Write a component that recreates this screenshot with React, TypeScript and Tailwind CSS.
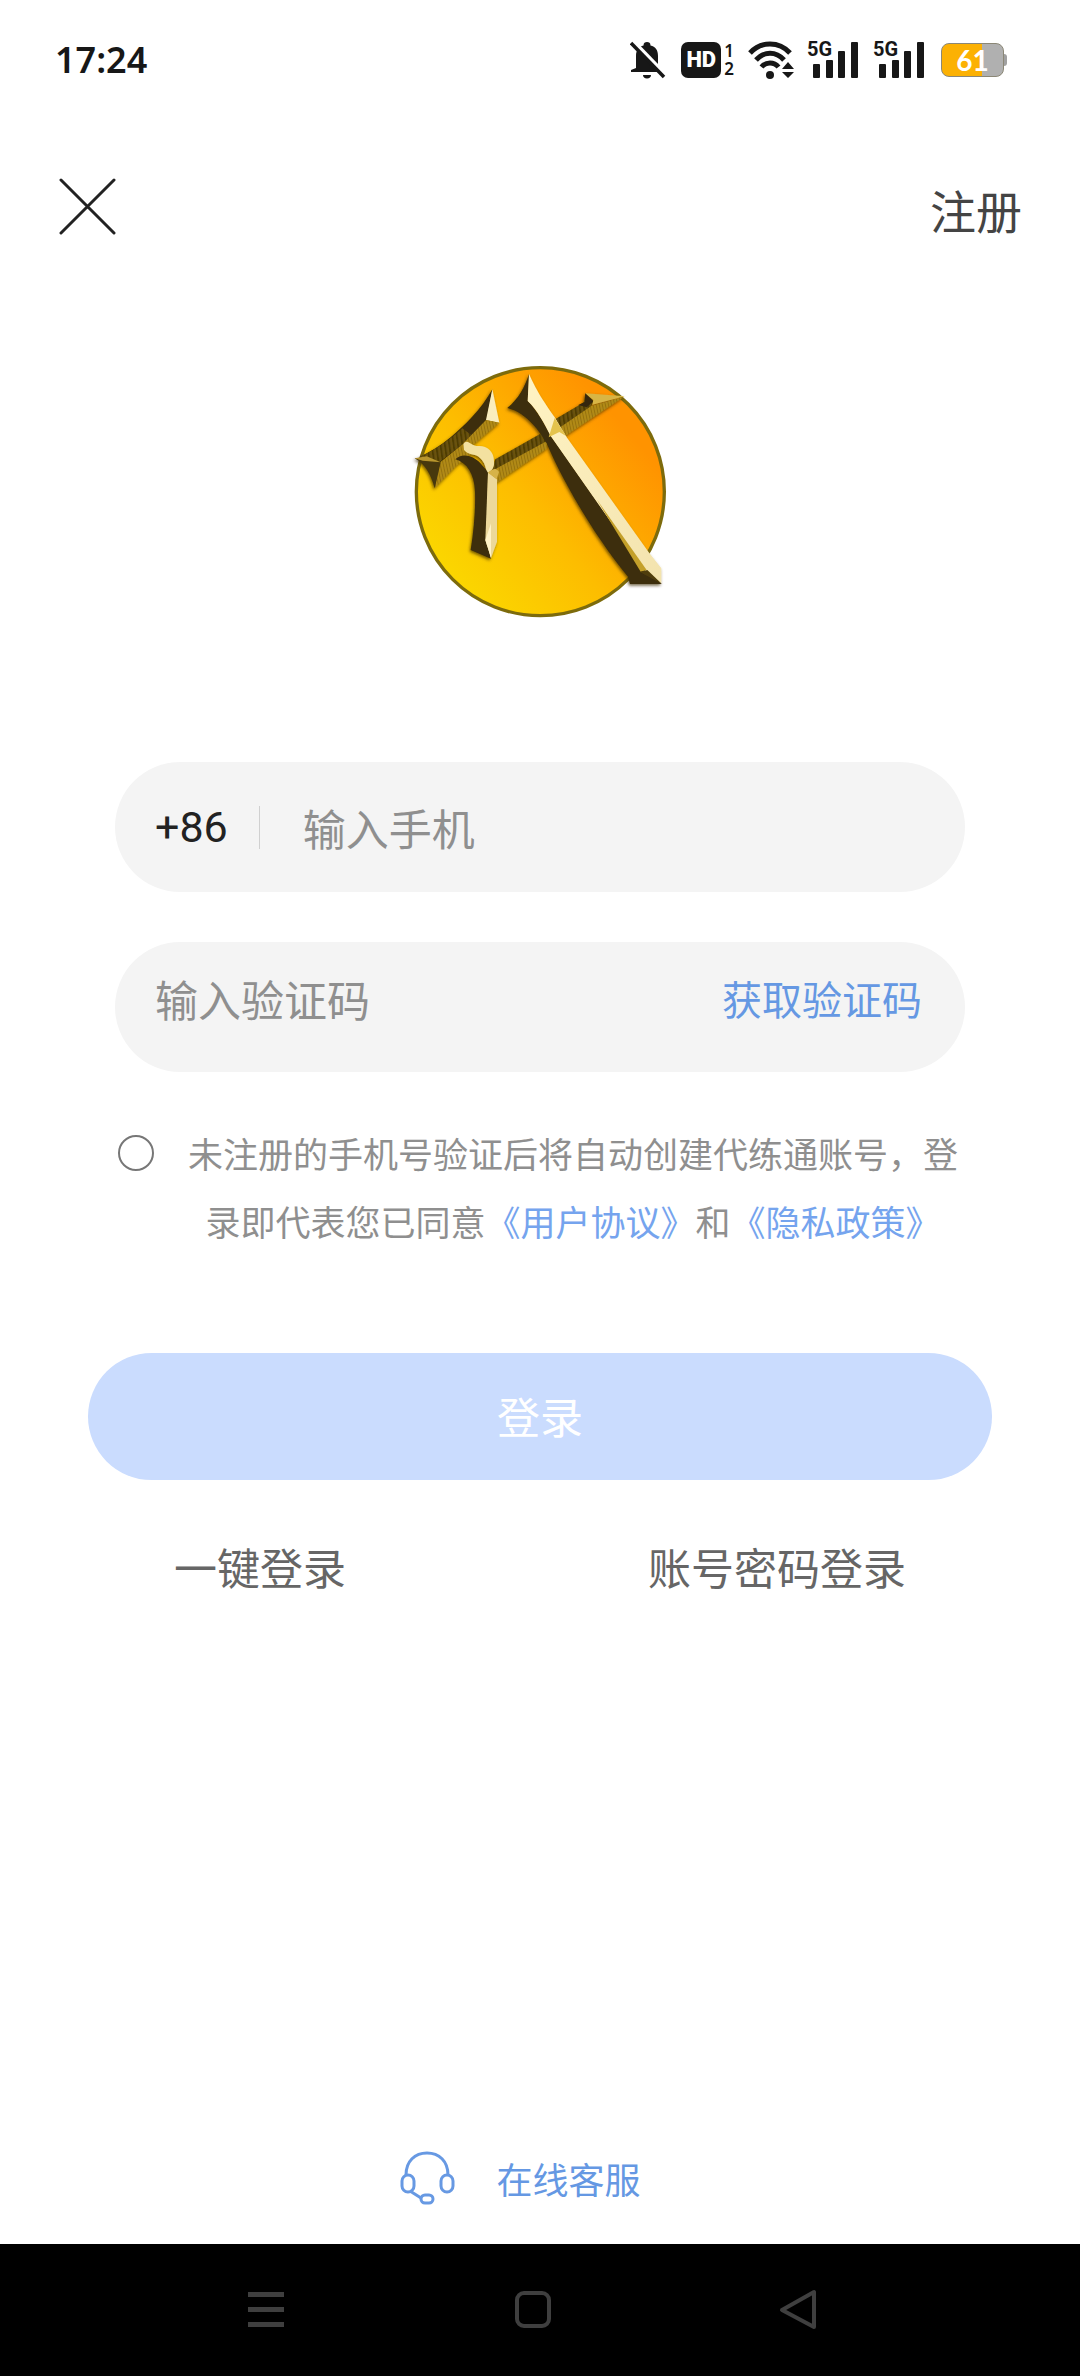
import { useState } from 'react'
import type { FormEvent } from 'react'

function BellOffIcon() {
  return (
    <svg width="36" height="38" viewBox="0 0 36 38" aria-hidden="true">
      <path d="M6 27V15C6 9 9 5.500 13.500 4.500C13.500 1.800 15 1 17 1s3.500.800 3.500 3.500C25.500 5.500 28 9 28 15v10l2.500 3v3H1v-2z" fill="#171717" />
      <path d="M13 34h8c0 2-1.500 3.500-4 3.500S13 36 13 34z" fill="#171717" />
      <path d="M3 0l33 34" stroke="#fff" strokeWidth="4" />
      <path d="M1 2l33 34" stroke="#171717" strokeWidth="3.500" />
    </svg>
  )
}

function WifiIcon() {
  return (
    <svg width="46" height="38" viewBox="0 0 46 38" fill="none" aria-hidden="true">
      <path d="M2 12C13 0 31 0 42 12M8 19C16 10 28 10 36 19M13.500 26C18 20.500 26 20.500 30.500 26" stroke="#171717" strokeWidth="5" />
      <circle cx="22" cy="34" r="4" fill="#171717" />
      <path d="M34 28l6-7 6 7zM34 31h12l-6 6z" fill="#171717" />
    </svg>
  )
}

function SignalIcon() {
  return (
    <svg width="52" height="50" viewBox="0 -6 52 50" fill="#171717" aria-label="5G">
      <text x="0" y="15" fontSize="20" fontWeight="700" className="font-['Roboto',sans-serif]">5G</text>
      <rect x="6" y="23" width="7" height="14" rx="1" />
      <rect x="19" y="19" width="7" height="18" rx="1" />
      <rect x="31" y="10" width="7" height="27" rx="1" />
      <rect x="44" y="1" width="7" height="36" rx="1" />
    </svg>
  )
}

function StatusBar() {
  return (
    <div className="flex h-[120px] items-center justify-between pl-[55px] pr-[73px] text-[#171717]">
      <span className="font-['Noto_Sans',sans-serif] text-[36px] font-semibold">17:24</span>
      <div className="flex items-center">
        <BellOffIcon />
        <div className="ml-[15px] flex h-9 w-10 items-center justify-center rounded-[7px] bg-[#171717] font-['Roboto',sans-serif] text-[22px] font-black text-white">HD</div>
        <div className="ml-[3px] mr-[14px] flex flex-col font-['Noto_Sans',sans-serif] text-[17px] leading-[18px] font-semibold">
          <span>1</span>
          <span>2</span>
        </div>
        <WifiIcon />
        <div className="ml-[13px] flex gap-[14px]">
          <SignalIcon />
          <SignalIcon />
        </div>
        <div className="ml-[16px] flex items-center">
          <div className="flex h-[34px] w-[63px] items-center justify-center rounded-[8px] border border-[#8b8776] bg-[linear-gradient(90deg,#fcb103_66%,#b0b0b0_66%)] font-['Lato',sans-serif] text-[28px] font-bold text-white">61</div>
          <div className="h-3 w-[3px] rounded-r-sm bg-[#a0a0a0]" />
        </div>
      </div>
    </div>
  )
}

function Logo() {
  return (
    <svg width="280" height="280" viewBox="0 0 840 840" role="img" aria-label="代练通">
      <defs>
        <linearGradient id="disc" x1="0.150" y1="0.850" x2="0.850" y2="0.250">
          <stop offset="0" stopColor="#fbd600" />
          <stop offset="0.450" stopColor="#fdbd00" />
          <stop offset="1" stopColor="#ff9300" />
        </linearGradient>
        <linearGradient id="cream" x1="0" y1="0" x2="1" y2="1">
          <stop offset="0" stopColor="#fff3c4" />
          <stop offset="1" stopColor="#f3e3ae" />
        </linearGradient>
        <pattern id="hatchDark" width="13" height="60" patternUnits="userSpaceOnUse" patternTransform="rotate(-8)">
          <rect width="13" height="60" fill="#6b5308" />
          <rect width="6" height="60" fill="#4f3d06" />
        </pattern>
        <pattern id="hatchGold" width="9" height="40" patternUnits="userSpaceOnUse" patternTransform="rotate(-12)">
          <rect width="9" height="40" fill="#b18a14" />
          <rect width="3" height="40" fill="#967210" />
        </pattern>
        <filter id="shadow" x="-10%" y="-10%" width="120%" height="120%">
          <feDropShadow dx="-3" dy="5" stdDeviation="5" floodColor="#3a2900" floodOpacity="0.700" />
        </filter>
      </defs>
      <circle cx="421" cy="425" r="372" fill="url(#disc)" stroke="#7d6b0c" strokeWidth="10" />
      <g filter="url(#shadow)">
        {/* cross bar */}
        <path d="M286 328L420 252L446 266L440 276L276 364z" fill="url(#hatchDark)" />
        <path d="M274 364L442 272L440 296L290 398z" fill="url(#hatchGold)" />
        <path d="M468 206L552 157L556 130L580 155L572 170L478 238z" fill="url(#hatchDark)" />
        <path d="M556 130L580 154L560 172L535 165L554 156z" fill="#34270a" />
        <path d="M474 236L574 168L672 140L492 260z" fill="url(#hatchGold)" />
        <path d="M556 130L674 139L577 164L580 150z" fill="#d8b544" />
        {/* short falling stroke */}
        <path d="M277 118C245 178 190 230 152 262C120 288 88 308 58 322L118 338L192 280L260 210z" fill="#3c2d08" />
        <path d="M187 235C150 270 100 302 58 322L118 336L192 280L214 255z" fill="url(#hatchDark)" />
        <path d="M277 118L298 218L258 210z" fill="#faedbd" />
        <path d="M258 210L298 218L216 288L190 280z" fill="url(#hatchGold)" />
        <path d="M120 338L192 280L216 310L172 345L104 415z" fill="url(#hatchGold)" />
        <path d="M44 325L80 322L122 337L104 415C92 372 78 345 44 325z" fill="#46370a" />
        <path d="M44 325L80 319L122 337L68 332z" fill="#b8962e" />
        {/* upright */}
        <path d="M166 328C185 306 222 318 240 338L264 366L259 570L273 626L212 600C221 545 227 480 225 425C223 370 200 338 166 328z" fill="#3c2d08" />
        <path d="M264 366L291 388L291 575L273 624L256 570z" fill="#ecd89a" />
        <path d="M273 520L273 624L256 570z" fill="#fff2c6" />
        <path d="M190 282C204 262 214 292 238 288C262 288 282 305 282 334C284 352 276 362 264 368C254 354 258 340 240 324C224 308 206 318 192 300z" fill="#f3e1a0" />
        <path d="M264 368C284 352 290 356 297 366L290 388z" fill="#d6b348" />
        {/* long slash */}
        <path d="M387 72L383 153C412 182 436 228 452 258L735 662L785 702L690 702L684 680C600 580 498 415 440 280C420 248 385 190 322 174C356 146 374 112 387 72z" fill="#3c2d08" />
        <path d="M387 72C408 118 424 144 464 202L500 262L745 605L784 655L784 700L735 662L452 258C434 222 412 180 383 153z" fill="url(#cream)" />
        <path d="M590 448L740 660L722 665z" fill="#c4a02a" />
        <path d="M720 666L742 660L785 701z" fill="#503e08" />
        <path d="M464 204L498 258L478 246L446 262z" fill="#e4c34d" />
      </g>
    </svg>
  )
}

function HeadsetIcon() {
  return (
    <svg width="56" height="56" viewBox="0 0 56 56" fill="none" stroke="#6799e3" strokeWidth="3" aria-hidden="true">
      <path d="M7 25C7 11 16 3 28 3s21 8 21 22" />
      <rect x="3" y="25" width="12" height="17" rx="6" />
      <rect x="42" y="25" width="12" height="17" rx="6" />
      <path d="M11 41l11 7" />
      <rect x="22" y="45" width="12" height="8" rx="4" />
    </svg>
  )
}

export default function App() {
  const [phone, setPhone] = useState('')
  const [code, setCode] = useState('')
  const [agreed, setAgreed] = useState(false)

  function handleSubmit(e: FormEvent) {
    e.preventDefault()
  }

  return (
    <div className="flex min-h-screen flex-col bg-white font-['Noto_Sans_CJK_SC',sans-serif] text-[43px] leading-[64px]">
      <StatusBar />

      <header className="flex h-[178px] items-center justify-between px-[58px]">
        <button type="button" aria-label="关闭">
          <svg width="58" height="62" viewBox="0 0 58 62" stroke="#222" strokeWidth="3" strokeLinecap="round" aria-hidden="true">
            <path d="M3 2l53 53M56 2L3 55" />
          </svg>
        </button>
        <a href="#register" className="text-[46px] text-[#444]">注册</a>
      </header>

      <main className="flex flex-1 flex-col">
        <div className="mt-[52px] flex justify-center">
          <Logo />
        </div>

        <form onSubmit={handleSubmit} className="mt-[132px] flex flex-col px-[88px]">
          <div className="mx-[27px] flex h-[130px] items-center rounded-full bg-[#f4f4f4] px-[40px]">
            <label htmlFor="phone" className="font-['Roboto',sans-serif] text-[#222]">+86</label>
            <span className="ml-[31px] h-[43px] w-px bg-[#d0d0d0]" />
            <input
              id="phone"
              type="tel"
              value={phone}
              onChange={(e) => setPhone(e.target.value)}
              placeholder="输入手机"
              className="ml-[43px] min-w-0 flex-1 bg-transparent text-[#222] outline-none placeholder:text-[#8f8f8f]"
            />
          </div>

          <div className="mx-[27px] mt-[50px] flex h-[130px] items-center rounded-full bg-[#f4f4f4] pb-[18px] pl-[40px] pr-[43px]">
            <input
              type="text"
              aria-label="验证码"
              value={code}
              onChange={(e) => setCode(e.target.value)}
              placeholder="输入验证码"
              className="min-w-0 flex-1 bg-transparent text-[#222] outline-none placeholder:text-[#8f8f8f]"
            />
            <button type="button" className="text-[40px] text-[#6598e3]">获取验证码</button>
          </div>

          <div className="mx-[27px] mt-[47px] flex items-start text-[35px] leading-[68px] text-[#8f8f8f]">
            <input
              id="agree"
              type="checkbox"
              checked={agreed}
              onChange={(e) => setAgreed(e.target.checked)}
              className="mx-[3px] mt-[16px] size-9 shrink-0 appearance-none rounded-full border-2 border-[#777] checked:bg-[#6598e3]"
            />
            <label htmlFor="agree" className="ml-[24px] flex-1 text-center">
              未注册的手机号验证后将自动创建代练通账号，登录即代表您已同意<a href="#terms" className="text-[#75a4ee]">《用户协议》</a>和<a href="#privacy" className="text-[#75a4ee]">《隐私政策》</a>
            </label>
          </div>

          <button type="submit" className="mt-[98px] h-[127px] rounded-full bg-[#cadcfe] pb-1 text-white">登录</button>

          <div className="mt-[54px] flex justify-between px-[86px] text-[#666]">
            <a href="#quick">一键登录</a>
            <a href="#password">账号密码登录</a>
          </div>
        </form>

        <a href="#support" className="mt-auto mb-[34px] flex items-center justify-center gap-[41px] pr-10 text-[36px] text-[#6598e3]">
          <HeadsetIcon />
          在线客服
        </a>
      </main>

      <nav className="flex h-[132px] items-center justify-between bg-black pl-[246px] pr-[262px]">
        <button type="button" aria-label="菜单">
          <svg width="40" height="44" viewBox="0 0 40 44" fill="#3f3f3f"><path d="M2 4h36v5H2zM2 19h36v5H2zM2 34h36v5H2z" /></svg>
        </button>
        <button type="button" aria-label="主页">
          <svg width="40" height="44" viewBox="0 0 40 44" fill="none" stroke="#3f3f3f" strokeWidth="4"><rect x="5" y="5" width="32" height="33" rx="7" /></svg>
        </button>
        <button type="button" aria-label="返回">
          <svg width="40" height="44" viewBox="0 0 40 44" fill="none" stroke="#3f3f3f" strokeWidth="4" strokeLinejoin="round"><path d="M36 4v35L4 22z" /></svg>
        </button>
      </nav>
    </div>
  )
}
